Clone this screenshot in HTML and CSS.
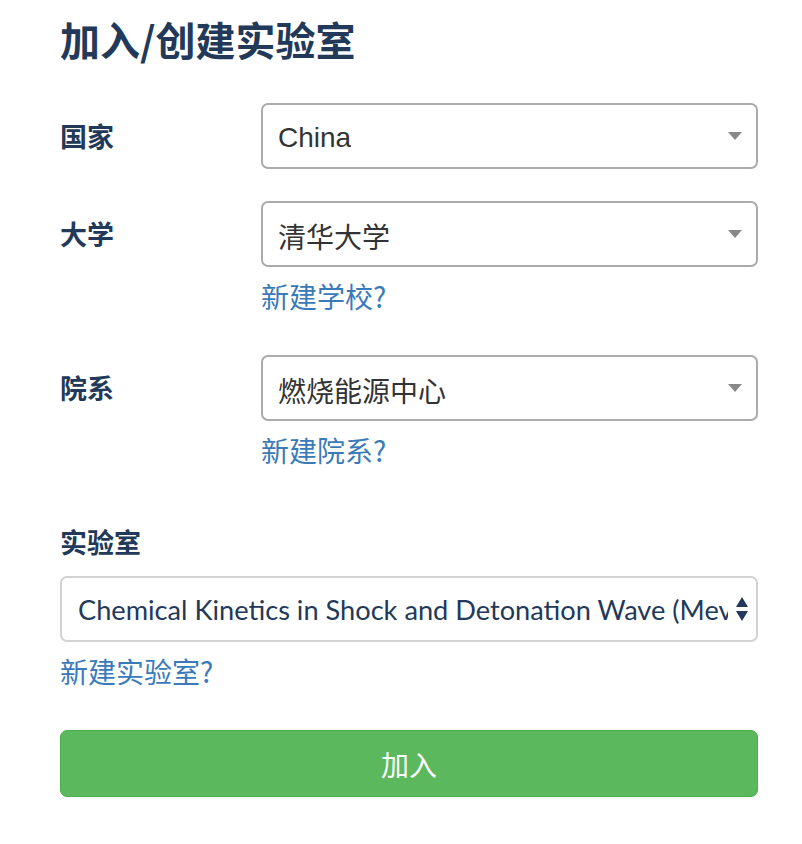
FILE: index.html
```html
<!DOCTYPE html>
<html lang="zh">
<head>
<meta charset="utf-8">
<link rel="stylesheet" href="styles.css">
</head>
<body>
<div class="page">
  <h1 class="title">加入/创建实验室</h1>
  <form class="form">
    <div class="row">
      <label class="label">国家</label>
      <div class="field">
        <div class="select"><span class="select-text latin">China</span>
          <svg class="caret" width="14" height="8" viewBox="0 0 14 8"><path d="M0 0H14L7 8Z" fill="#888"/></svg>
        </div>
      </div>
    </div>
    <div class="row">
      <label class="label">大学</label>
      <div class="field">
        <div class="select"><span class="select-text">清华大学</span>
          <svg class="caret" width="14" height="8" viewBox="0 0 14 8"><path d="M0 0H14L7 8Z" fill="#888"/></svg>
        </div>
        <a class="link" href="#">新建学校?</a>
      </div>
    </div>
    <div class="row row-dept">
      <label class="label">院系</label>
      <div class="field">
        <div class="select"><span class="select-text">燃烧能源中心</span>
          <svg class="caret" width="14" height="8" viewBox="0 0 14 8"><path d="M0 0H14L7 8Z" fill="#888"/></svg>
        </div>
        <a class="link" href="#">新建院系?</a>
      </div>
    </div>
    <div class="block">
      <label class="label">实验室</label>
      <div class="select select-lab"><span class="select-text lab-text">Chemical Kinetics in Shock and Detonation Wave (Mevs)</span>
        <svg class="spinner" width="12" height="24" viewBox="0 0 12 24"><path d="M6 0L12 10H0Z M0 14H12L6 24Z" fill="#22395a"/></svg>
      </div>
      <a class="link" href="#">新建实验室?</a>
    </div>
    <button class="btn" type="button">加入</button>
  </form>
</div>
</body>
</html>
```
FILE: styles.css
```css
* { box-sizing: border-box; }
body {
  margin: 0;
  background: #fff;
  font-family: "Noto Sans CJK SC", sans-serif;
}
.page {
  padding: 14px 0 0 60px;
  width: 758px;
}
.title {
  margin: 0;
  font-size: 40px;
  line-height: 50px;
  font-weight: 700;
  color: #22395a;
}
.form {
  margin-top: 39px;
  display: flex;
  flex-direction: column;
}
.row {
  display: grid;
  grid-template-columns: 201px 1fr;
  align-items: start;
  margin-bottom: 32px;
}
.row-dept { margin-bottom: 48px; }
.label {
  font-size: 27px;
  font-weight: 700;
  color: #22395a;
  line-height: 66px;
}
.field {
  display: flex;
  flex-direction: column;
  align-items: flex-start;
}
.row .link { margin-bottom: 10px; }
.select {
  width: 100%;
  height: 66px;
  border: 2px solid #ababab;
  border-radius: 7px;
  display: flex;
  align-items: center;
  justify-content: space-between;
  padding: 0 14px 0 15px;
  overflow: hidden;
}
.select-text {
  font-size: 28px;
  color: #333;
  white-space: nowrap;
  overflow: hidden;
  padding-top: 4px;
}
.latin { font-family: "Liberation Sans", "Noto Sans CJK SC", sans-serif; }
.caret { flex: none; }
.link {
  margin-top: 12px;
  font-size: 28px;
  line-height: 34px;
  color: #3a7ab9;
  text-decoration: none;
}
.block {
  display: flex;
  flex-direction: column;
  align-items: flex-start;
}
.block .label { line-height: 34px; margin-bottom: 17px; }
.select-lab {
  border-color: #d2d2d2;
  padding: 0 8px 0 16px;
}
.lab-text {
  font-family: Lato, sans-serif;
  font-size: 27.2px;
  color: #22395a;
  flex: 1;
  overflow: hidden;
  text-overflow: clip;
  padding-top: 0;
}
.spinner { flex: none; margin-left: 8px; }
.btn {
  margin-top: 42px;
  width: 100%;
  height: 67px;
  background: #5cb85c;
  border: 1px solid #4cae4c;
  border-radius: 7px;
  color: #fff;
  font-size: 28px;
  font-family: "Noto Sans CJK SC", sans-serif;
}
```
